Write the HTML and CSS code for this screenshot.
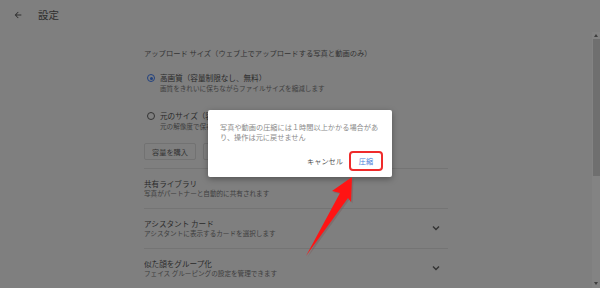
FILE: index.html
```html
<!DOCTYPE html>
<html lang="ja">
<head>
<meta charset="utf-8">
<title>設定</title>
<link rel="stylesheet" href="styles.css">
</head>
<body>
<div class="app">
  <header class="topbar">
    <span class="back">
      <svg width="10" height="10" viewBox="0 0 24 24"><path d="M20 11H7.83l5.59-5.59L12 4l-8 8 8 8 1.41-1.41L7.83 13H20v-2z" fill="#2e2e2e"/></svg>
    </span>
    <span class="title">設定</span>
  </header>
  <main class="content">
    <section class="upload">
      <div class="label">アップロード サイズ（ウェブ上でアップロードする写真と動画のみ）</div>
      <div class="radio-row first">
        <span class="radio checked"></span>
        <div class="radio-text">
          <div class="item-title">高画質（容量制限なし、無料）</div>
          <div class="item-sub">画質をきれいに保ちながらファイルサイズを縮減します</div>
        </div>
      </div>
      <div class="radio-row second">
        <span class="radio"></span>
        <div class="radio-text">
          <div class="item-title">元のサイズ（容量制限あり）</div>
          <div class="item-sub">元の解像度で保存します</div>
        </div>
      </div>
      <div class="btns">
        <span class="btn">容量を購入</span>
        <span class="btn">ストレージを管理</span>
      </div>
    </section>
    <div class="row">
      <div>
        <div class="item-title">共有ライブラリ</div>
        <div class="item-sub">写真がパートナーと自動的に共有されます</div>
      </div>
    </div>
    <div class="row">
      <div>
        <div class="item-title">アシスタント カード</div>
        <div class="item-sub">アシスタントに表示するカードを選択します</div>
      </div>
      <svg class="chev" width="8" height="6" viewBox="0 0 8 6"><path d="M1 1.5l3 3 3-3" fill="none" stroke="#333" stroke-width="1.4"/></svg>
    </div>
    <div class="row">
      <div>
        <div class="item-title">似た顔をグループ化</div>
        <div class="item-sub">フェイス グルーピングの設定を管理できます</div>
      </div>
      <svg class="chev" width="8" height="6" viewBox="0 0 8 6"><path d="M1 1.5l3 3 3-3" fill="none" stroke="#333" stroke-width="1.4"/></svg>
    </div>
  </main>
  <div class="scrollbar">
    <span class="sb-arrow up"></span>
    <span class="thumb"></span>
    <span class="sb-space"></span>
    <span class="sb-arrow down"></span>
  </div>
</div>

<div class="dialog">
  <p class="dialog-text">写真や動画の圧縮には１時間以上かかる場合があり、操作は元に戻せません</p>
  <div class="dialog-actions">
    <span class="dbtn cancel">キャンセル</span>
    <span class="dbtn ok">圧縮</span>
  </div>
</div>

<svg class="arrow" width="600" height="288" viewBox="0 0 600 288">
  <polygon points="352,177 332,191 340,193 306,256 348,198 351,202" fill="#7a5050" opacity="0.35" transform="translate(1.5,1.5)"/>
  <polygon points="352,177 332,191 340,193 306,256 348,198 351,202" fill="#ff1414"/>
</svg>
</body>
</html>
```

FILE: styles.css
```css
html, body {
  margin: 0;
  padding: 0;
  width: 600px;
  height: 288px;
  overflow: hidden;
  background: #7f7f7f;
  font-family: "Noto Sans CJK JP", "Noto Sans", sans-serif;
}

.app {
  display: grid;
  grid-template-columns: 1fr 8px;
  grid-template-rows: 32px 1fr;
  width: 600px;
  height: 288px;
}

.topbar {
  grid-column: 1 / 3;
  display: flex;
  align-items: center;
  padding-left: 13px;
  padding-bottom: 3px;
}

.back {
  display: flex;
  width: 10px;
  height: 10px;
}

.title {
  margin-left: 15px;
  font-size: 10.5px;
  line-height: 12px;
  color: #2e2e2e;
}

.content {
  grid-column: 1;
  margin-left: 144px;
  width: 304px;
  overflow: hidden;
}

.upload {
  padding-top: 16px;
  padding-bottom: 8px;
  border-bottom: 1px solid #747474;
}

.label {
  font-size: 7.3px;
  line-height: 10px;
  color: #333;
}

.radio-row {
  display: flex;
  align-items: flex-start;
  padding-left: 3px;
  gap: 5px;
}

.radio-row.first { margin-top: 15px; }
.radio-row.second { margin-top: 19px; }

.radio {
  width: 6px;
  height: 6px;
  border: 1.2px solid #333;
  border-radius: 50%;
  margin-top: 1px;
  flex: none;
  position: relative;
}

.radio.checked {
  border-color: #22427f;
}

.radio.checked::after {
  content: "";
  position: absolute;
  left: 1.5px;
  top: 1.5px;
  width: 3px;
  height: 3px;
  border-radius: 50%;
  background: #22427f;
}

.item-title {
  font-size: 7.6px;
  line-height: 10px;
  color: #2a2a2a;
  white-space: nowrap;
}

.item-sub {
  font-size: 6.6px;
  line-height: 8px;
  color: #3e3e3e;
  white-space: nowrap;
}

.radio-text .item-sub {
  margin-top: 1px;
}

.btns {
  display: flex;
  gap: 7px;
  margin-top: 13px;
}

.btn {
  display: flex;
  align-items: center;
  height: 15px;
  padding: 0 7px;
  border: 1px solid #727272;
  border-radius: 2px;
  font-size: 7.2px;
  color: #333;
  white-space: nowrap;
}

.row {
  display: flex;
  align-items: center;
  justify-content: space-between;
  padding: 10px 8px 11px 0;
  border-bottom: 1px solid #747474;
}

.chev {
  display: block;
}

.scrollbar {
  grid-column: 2;
  grid-row: 2;
  display: flex;
  flex-direction: column;
  align-items: center;
  background: #838383;
}

.sb-arrow {
  width: 0;
  height: 0;
  border-left: 2.5px solid transparent;
  border-right: 2.5px solid transparent;
  flex: none;
}

.sb-arrow.up {
  border-bottom: 3px solid #3e3e3e;
  margin-top: 2px;
}

.sb-arrow.down {
  border-top: 3px solid #3e3e3e;
  margin-bottom: 3px;
}

.thumb {
  width: 7px;
  height: 137px;
  margin-top: 2px;
  background: #6f6f6f;
  flex: none;
}

.sb-space {
  flex: 1;
}

.dialog {
  position: absolute;
  left: 208px;
  top: 110px;
  width: 184px;
  height: 67px;
  box-sizing: border-box;
  background: #fff;
  border-radius: 2px;
  box-shadow: 0 2px 6px rgba(0, 0, 0, 0.35);
  padding: 12px 9px 6px 12px;
  display: flex;
  flex-direction: column;
}

.dialog-text {
  margin: 0;
  width: 160px;
  font-size: 7.2px;
  line-height: 10px;
  color: #8a8a8a;
}

.dialog-actions {
  margin-top: auto;
  display: flex;
  justify-content: flex-end;
  align-items: center;
  gap: 6px;
}

.dbtn {
  font-size: 7.2px;
  line-height: 10px;
  white-space: nowrap;
}

.cancel {
  color: #555;
}

.ok {
  display: flex;
  align-items: center;
  justify-content: center;
  box-sizing: border-box;
  width: 34px;
  height: 20px;
  border: 2px solid #ef2b2b;
  border-radius: 4px;
  color: #4a7fd8;
}

.arrow {
  position: absolute;
  left: 0;
  top: 0;
  pointer-events: none;
}
```
